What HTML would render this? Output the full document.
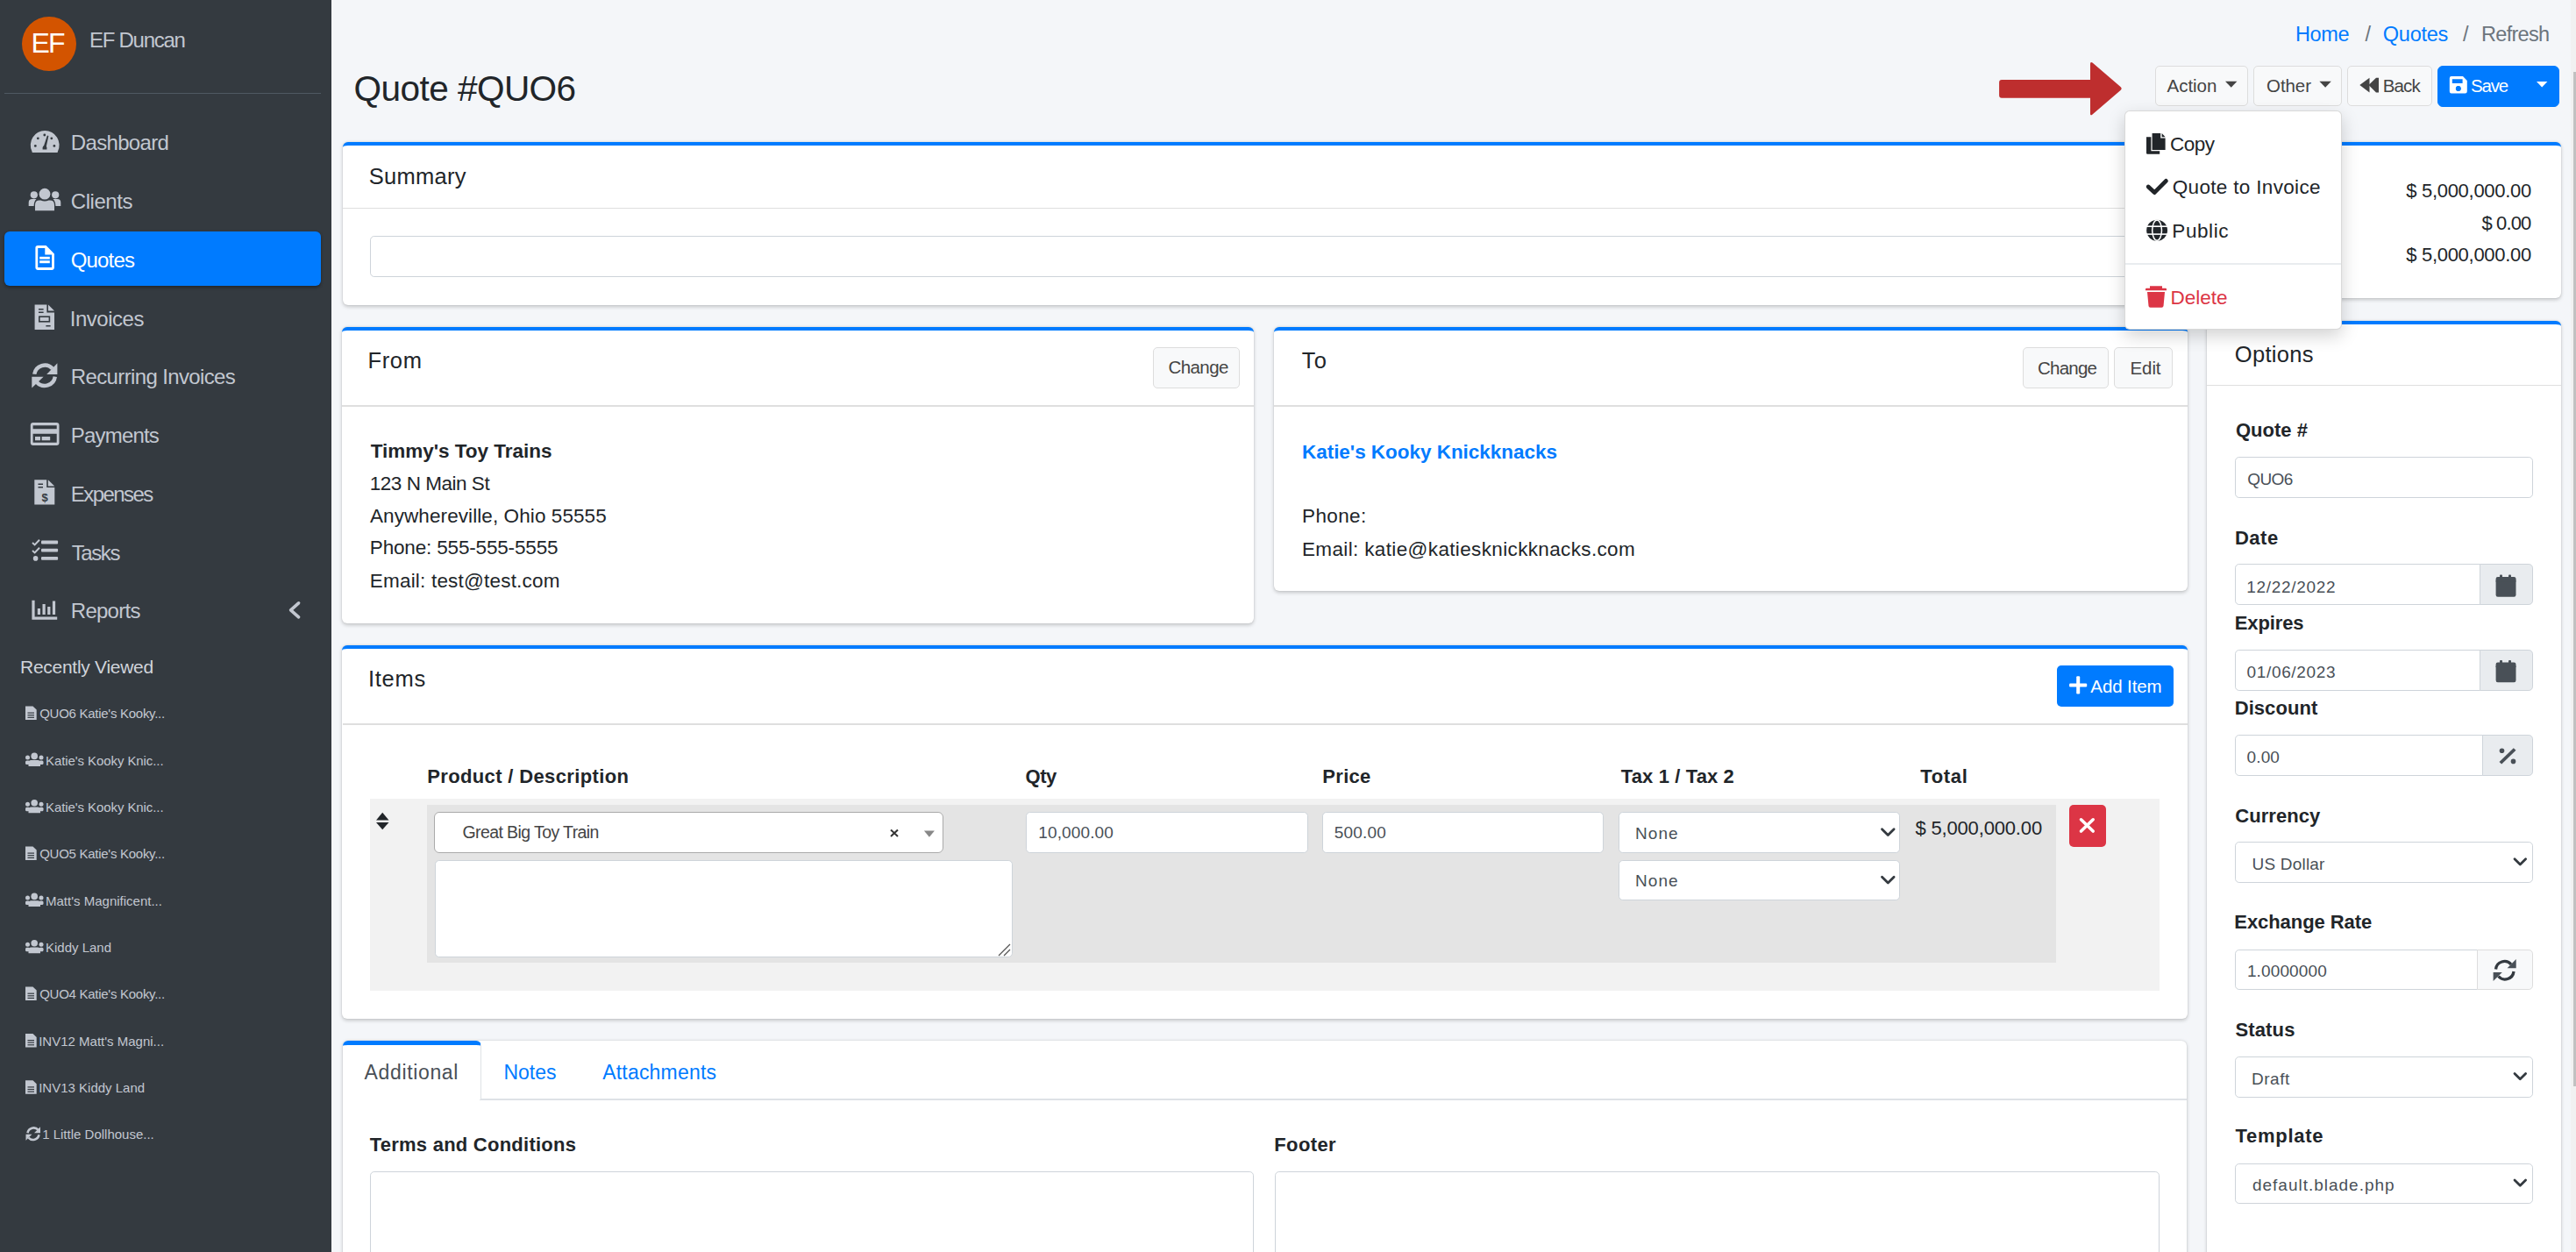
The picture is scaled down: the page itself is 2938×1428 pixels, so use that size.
<!DOCTYPE html>
<html><head><meta charset="utf-8"><title>Quote #QUO6</title>
<style>
html,body{margin:0;padding:0;width:2938px;height:1428px;overflow:hidden;background:#f4f6f9;font-family:"Liberation Sans", sans-serif;}
*{box-sizing:border-box;}
</style></head><body>
<div style="position:absolute;left:0.00px;top:0.00px;width:378.20px;height:1428.00px;background:#343a40;"></div>
<div style="position:absolute;left:25.00px;top:19.00px;width:62.00px;height:62.00px;background:#d35400;border-radius:50%;"></div>
<span style="position:absolute;left:35.50px;top:33.31px;font-size:32px;line-height:32px;color:#fff;font-weight:400;white-space:pre;letter-spacing:-1.844px;">EF</span>
<span style="position:absolute;left:102.00px;top:34.28px;font-size:24px;line-height:24px;color:#c2c7d0;font-weight:400;white-space:pre;letter-spacing:-1.276px;">EF Duncan</span>
<div style="position:absolute;left:5.00px;top:105.50px;width:361.00px;height:1.50px;background:#4f5962;"></div>
<div style="position:absolute;left:5.00px;top:264.20px;width:361.40px;height:61.70px;background:#007bff;border-radius:6px;box-shadow:0 1.5px 4.5px rgba(0,0,0,.12),0 1.5px 3px rgba(0,0,0,.24);"></div>
<span style="position:absolute;left:80.80px;top:151.48px;font-size:24px;line-height:24px;color:#c2c7d0;font-weight:400;white-space:pre;letter-spacing:-0.670px;">Dashboard</span>
<span style="position:absolute;left:80.80px;top:218.23px;font-size:24px;line-height:24px;color:#c2c7d0;font-weight:400;white-space:pre;letter-spacing:-0.460px;">Clients</span>
<span style="position:absolute;left:80.80px;top:284.98px;font-size:24px;line-height:24px;color:#fff;font-weight:400;white-space:pre;letter-spacing:-0.856px;">Quotes</span>
<span style="position:absolute;left:79.80px;top:351.73px;font-size:24px;line-height:24px;color:#c2c7d0;font-weight:400;white-space:pre;letter-spacing:-0.492px;">Invoices</span>
<span style="position:absolute;left:80.80px;top:418.48px;font-size:24px;line-height:24px;color:#c2c7d0;font-weight:400;white-space:pre;letter-spacing:-0.632px;">Recurring Invoices</span>
<span style="position:absolute;left:80.80px;top:485.23px;font-size:24px;line-height:24px;color:#c2c7d0;font-weight:400;white-space:pre;letter-spacing:-0.816px;">Payments</span>
<span style="position:absolute;left:80.80px;top:551.98px;font-size:24px;line-height:24px;color:#c2c7d0;font-weight:400;white-space:pre;letter-spacing:-1.571px;">Expenses</span>
<span style="position:absolute;left:81.80px;top:618.73px;font-size:24px;line-height:24px;color:#c2c7d0;font-weight:400;white-space:pre;letter-spacing:-1.437px;">Tasks</span>
<span style="position:absolute;left:80.80px;top:685.48px;font-size:24px;line-height:24px;color:#c2c7d0;font-weight:400;white-space:pre;letter-spacing:-0.739px;">Reports</span>
<svg style="position:absolute;left:0;top:0;overflow:visible" width="2938" height="1428" viewBox="0 0 2938 1428" fill="#c2c7d0"><path d="M36.4 172.5 A16.4 16.4 0 1 1 66 172.5 L65.6 174 L36.8 174 Z"/><g fill="#343a40"><circle cx="43.3" cy="157.8" r="1.4"/><circle cx="50.8" cy="154" r="1.4"/><circle cx="58.8" cy="157.8" r="1.4"/><circle cx="40.3" cy="166.4" r="1.4"/><circle cx="61.9" cy="166.4" r="1.4"/><path d="M53.9 154.5 L55.4 155 L52.6 168 L49.6 167.4 Z"/><path d="M48.6 168.5 Q48.6 166 51 166 Q53.4 166 53.4 168.5 L53.4 170.6 L48.6 170.6 Z"/></g><circle cx="51" cy="221.2" r="6.4"/><path d="M40 240.3 L40 234 Q40 228.6 45 228.6 L46.5 228.6 Q51 230.6 55.5 228.6 L57 228.6 Q62 228.6 62 234 L62 240.3 Z"/><circle cx="38.8" cy="222.3" r="4.1"/><circle cx="63.2" cy="222.3" r="4.1"/><path d="M32.7 234.9 L32.7 231 Q32.7 227.1 36.7 227.1 L41.5 227.1 Q38.6 230 38.6 234.9 Z"/><path d="M69.3 234.9 L69.3 231 Q69.3 227.1 65.3 227.1 L60.5 227.1 Q63.4 230 63.4 234.9 Z"/><path fill="#fff" fill-rule="evenodd" d="M40.4 282.8 Q40.4 280 43.2 280 L52.6 280 L61.9 289.4 L61.9 305.1 Q61.9 307.9 59.1 307.9 L43.2 307.9 Q40.4 307.9 40.4 305.1 Z M43.2 282.9 L43.2 305 L59.1 305 L59.1 290.5 L51.3 290.5 L51.3 282.9 Z"/><rect fill="#fff" x="45.2" y="292.8" width="11.6" height="2.8"/><rect fill="#fff" x="45.2" y="297.2" width="11.6" height="3.0"/><path d="M39.6 347.6 L53.4 347.6 L53.4 356.4 L62 356.4 L62 376 L39.6 376 Z"/><path d="M55 347.6 L62 354.6 L55 354.6 Z"/><g fill="#343a40"><rect x="44" y="352" width="5.6" height="1.5"/><rect x="44" y="355.5" width="5.6" height="1.5"/><rect x="44" y="360.4" width="13.2" height="7.2"/><rect x="52.4" y="371" width="5.2" height="1.5"/></g><rect x="45.6" y="362" width="10" height="4" fill="#c2c7d0"/><g fill="none" stroke="#c2c7d0" stroke-width="4.4"><path d="M39.2 426.8 A12 12 0 0 1 60 420.5"/><path d="M62.8 429.6 A12 12 0 0 1 42 436"/></g><path d="M65.4 414.3 L65.4 426.9 L53.2 426.9 Z"/><path d="M36.3 442.4 L36.3 429.8 L49.6 429.8 Z"/><path fill-rule="evenodd" d="M37.8 482 L64.5 482 Q67.5 482 67.5 485 L67.5 505 Q67.5 508 64.5 508 L37.8 508 Q34.8 508 34.8 505 L34.8 485 Q34.8 482 37.8 482 Z M37.6 485.3 L37.6 489.2 L64.7 489.2 L64.7 485.3 Z M37.6 494.8 L37.6 504.8 L64.7 504.8 L64.7 494.8 Z"/><rect x="40" y="498" width="6" height="4.3"/><rect x="47.6" y="498" width="9.6" height="4.3"/><path d="M39.3 547.3 L53.2 547.3 L53.2 556 L62.3 556 L62.3 575.5 L39.3 575.5 Z"/><path d="M54.8 547.3 L62.3 554.6 L54.8 554.6 Z"/><g fill="#343a40"><rect x="43.5" y="551.5" width="5.5" height="1.5"/><rect x="43.5" y="555" width="5.5" height="1.5"/></g><text x="51" y="572" font-size="13" font-family="Liberation Sans" font-weight="700" fill="#343a40" text-anchor="middle">$</text><rect x="47" y="616.6" width="19.1" height="3.8" rx="1"/><rect x="47" y="625.8" width="19.1" height="3.8" rx="1"/><rect x="47" y="634.9" width="19.1" height="3.8" rx="1"/><g fill="none" stroke="#c2c7d0" stroke-width="2"><path d="M37 619 L39.6 621.4 L45 615.8"/><path d="M37 628 L39.6 630.4 L45 624.8"/></g><circle cx="40.6" cy="636.9" r="2.8"/><path d="M36.4 684.7 L39.6 684.7 L39.6 703.5 L65.2 703.5 L65.2 706.8 L36.4 706.8 Z"/><rect x="42.8" y="694" width="3.2" height="7"/><rect x="48.5" y="689" width="3.2" height="12"/><rect x="54.2" y="692" width="3.2" height="9"/><rect x="59.9" y="685.5" width="3.2" height="15.5"/><path d="M340.6 687.8 L331.6 695.8 L340.6 703.8" fill="none" stroke="#c2c7d0" stroke-width="3.6" stroke-linecap="round" stroke-linejoin="round"/></svg>
<span style="position:absolute;left:23.00px;top:750.22px;font-size:21px;line-height:21px;color:#d0d4db;font-weight:400;white-space:pre;letter-spacing:-0.275px;">Recently Viewed</span>
<span style="position:absolute;left:45.20px;top:806.30px;font-size:15px;line-height:15px;color:#c2c7d0;font-weight:400;white-space:pre;letter-spacing:-0.275px;">QUO6 Katie&#x27;s Kooky...</span>
<span style="position:absolute;left:52.00px;top:859.65px;font-size:15px;line-height:15px;color:#c2c7d0;font-weight:400;white-space:pre;letter-spacing:-0.085px;">Katie&#x27;s Kooky Knic...</span>
<span style="position:absolute;left:52.00px;top:913.00px;font-size:15px;line-height:15px;color:#c2c7d0;font-weight:400;white-space:pre;letter-spacing:-0.085px;">Katie&#x27;s Kooky Knic...</span>
<span style="position:absolute;left:45.20px;top:966.35px;font-size:15px;line-height:15px;color:#c2c7d0;font-weight:400;white-space:pre;letter-spacing:-0.275px;">QUO5 Katie&#x27;s Kooky...</span>
<span style="position:absolute;left:52.00px;top:1019.70px;font-size:15px;line-height:15px;color:#c2c7d0;font-weight:400;white-space:pre;">Matt&#x27;s Magnificent...</span>
<span style="position:absolute;left:52.00px;top:1073.05px;font-size:15px;line-height:15px;color:#c2c7d0;font-weight:400;white-space:pre;">Kiddy Land</span>
<span style="position:absolute;left:45.20px;top:1126.40px;font-size:15px;line-height:15px;color:#c2c7d0;font-weight:400;white-space:pre;letter-spacing:-0.275px;">QUO4 Katie&#x27;s Kooky...</span>
<span style="position:absolute;left:44.20px;top:1179.75px;font-size:15px;line-height:15px;color:#c2c7d0;font-weight:400;white-space:pre;">INV12 Matt&#x27;s Magni...</span>
<span style="position:absolute;left:44.20px;top:1233.10px;font-size:15px;line-height:15px;color:#c2c7d0;font-weight:400;white-space:pre;">INV13 Kiddy Land</span>
<span style="position:absolute;left:48.20px;top:1286.45px;font-size:15px;line-height:15px;color:#c2c7d0;font-weight:400;white-space:pre;">1 Little Dollhouse...</span>
<svg style="position:absolute;left:0;top:0;overflow:visible" width="2938" height="1428" viewBox="0 0 2938 1428" fill="#c2c7d0"><path d="M29 805.5 L37.5 805.5 L41.7 809.5 L41.7 821.0 L29 821.0 Z"/><g fill="#343a40"><rect x="31.5" y="812.5" width="7.5" height="1.2"/><rect x="31.5" y="815.1" width="7.5" height="1.2"/><rect x="31.5" y="817.7" width="7.5" height="1.2"/></g><circle cx="39.2" cy="862.4" r="3.8"/><path d="M32.5 873.9 L32.5 870.4 Q32.5 867.1 35.5 867.1 L43 867.1 Q46 867.1 46 870.4 L46 873.9 Z"/><circle cx="31.5" cy="863.9" r="2.5"/><circle cx="47" cy="863.9" r="2.5"/><rect x="29" y="867.4" width="5" height="4.5" rx="1.5"/><rect x="44.5" y="867.4" width="5" height="4.5" rx="1.5"/><circle cx="39.2" cy="915.7" r="3.8"/><path d="M32.5 927.2 L32.5 923.7 Q32.5 920.5 35.5 920.5 L43 920.5 Q46 920.5 46 923.7 L46 927.2 Z"/><circle cx="31.5" cy="917.2" r="2.5"/><circle cx="47" cy="917.2" r="2.5"/><rect x="29" y="920.7" width="5" height="4.5" rx="1.5"/><rect x="44.5" y="920.7" width="5" height="4.5" rx="1.5"/><path d="M29 965.5 L37.5 965.5 L41.7 969.5 L41.7 981.0 L29 981.0 Z"/><g fill="#343a40"><rect x="31.5" y="972.5" width="7.5" height="1.2"/><rect x="31.5" y="975.1" width="7.5" height="1.2"/><rect x="31.5" y="977.8" width="7.5" height="1.2"/></g><circle cx="39.2" cy="1022.4" r="3.8"/><path d="M32.5 1033.9 L32.5 1030.4 Q32.5 1027.2 35.5 1027.2 L43 1027.2 Q46 1027.2 46 1030.4 L46 1033.9 Z"/><circle cx="31.5" cy="1023.9" r="2.5"/><circle cx="47" cy="1023.9" r="2.5"/><rect x="29" y="1027.4" width="5" height="4.5" rx="1.5"/><rect x="44.5" y="1027.4" width="5" height="4.5" rx="1.5"/><circle cx="39.2" cy="1075.8" r="3.8"/><path d="M32.5 1087.2 L32.5 1083.8 Q32.5 1080.5 35.5 1080.5 L43 1080.5 Q46 1080.5 46 1083.8 L46 1087.2 Z"/><circle cx="31.5" cy="1077.2" r="2.5"/><circle cx="47" cy="1077.2" r="2.5"/><rect x="29" y="1080.8" width="5" height="4.5" rx="1.5"/><rect x="44.5" y="1080.8" width="5" height="4.5" rx="1.5"/><path d="M29 1125.6 L37.5 1125.6 L41.7 1129.6 L41.7 1141.1 L29 1141.1 Z"/><g fill="#343a40"><rect x="31.5" y="1132.6" width="7.5" height="1.2"/><rect x="31.5" y="1135.2" width="7.5" height="1.2"/><rect x="31.5" y="1137.8" width="7.5" height="1.2"/></g><path d="M29 1179.0 L37.5 1179.0 L41.7 1183.0 L41.7 1194.5 L29 1194.5 Z"/><g fill="#343a40"><rect x="31.5" y="1186.0" width="7.5" height="1.2"/><rect x="31.5" y="1188.5" width="7.5" height="1.2"/><rect x="31.5" y="1191.2" width="7.5" height="1.2"/></g><path d="M29 1232.3 L37.5 1232.3 L41.7 1236.3 L41.7 1247.8 L29 1247.8 Z"/><g fill="#343a40"><rect x="31.5" y="1239.3" width="7.5" height="1.2"/><rect x="31.5" y="1241.9" width="7.5" height="1.2"/><rect x="31.5" y="1244.5" width="7.5" height="1.2"/></g><g fill="none" stroke="#c2c7d0" stroke-width="2.6"><path d="M31.5 1292.2 A7 7 0 0 1 43.5 1288.7"/><path d="M44.5 1294.2 A7 7 0 0 1 32.5 1297.7"/></g><path d="M46 1285.2 L46 1292.2 L39 1292.2 Z"/><path d="M29.5 1300.7 L29.5 1293.7 L36.5 1293.7 Z"/></svg>
<span style="position:absolute;left:2618.00px;top:27.90px;font-size:23.5px;line-height:23.5px;color:#007bff;font-weight:400;white-space:pre;letter-spacing:-0.405px;">Home</span>
<span style="position:absolute;left:2697.50px;top:27.90px;font-size:23.5px;line-height:23.5px;color:#6c757d;font-weight:400;white-space:pre;">/</span>
<span style="position:absolute;left:2717.80px;top:27.90px;font-size:23.5px;line-height:23.5px;color:#007bff;font-weight:400;white-space:pre;letter-spacing:-0.243px;">Quotes</span>
<span style="position:absolute;left:2809.00px;top:27.90px;font-size:23.5px;line-height:23.5px;color:#6c757d;font-weight:400;white-space:pre;">/</span>
<span style="position:absolute;left:2830.00px;top:27.90px;font-size:23.5px;line-height:23.5px;color:#6c757d;font-weight:400;white-space:pre;letter-spacing:-0.702px;">Refresh</span>
<span style="position:absolute;left:403.60px;top:80.82px;font-size:40.6px;line-height:40.6px;color:#212529;font-weight:400;white-space:pre;letter-spacing:-0.581px;">Quote #QUO6</span>
<svg style="position:absolute;left:0;top:0;overflow:visible" width="2938" height="1428" viewBox="0 0 2938 1428" fill="#be2e2e"><path d="M2283 90.9 L2384 90.9 L2384 73 Q2384 70 2386.5 71.5 L2418.5 99 Q2420.8 101 2418.5 103 L2386.5 130.5 Q2384 132.6 2384 129.5 L2384 111.8 L2283 111.8 Q2280.1 111.8 2280.1 108.8 L2280.1 93.9 Q2280.1 90.9 2283 90.9 Z"/></svg>
<div style="position:absolute;left:2458.30px;top:74.80px;width:106.20px;height:46.70px;background:#f8f9fa;border:1.5px solid #ddd;border-radius:5px;"></div>
<div style="position:absolute;left:2570.40px;top:74.80px;width:100.60px;height:46.70px;background:#f8f9fa;border:1.5px solid #ddd;border-radius:5px;"></div>
<div style="position:absolute;left:2677.30px;top:74.80px;width:96.90px;height:46.70px;background:#f8f9fa;border:1.5px solid #ddd;border-radius:5px;"></div>
<div style="position:absolute;left:2780.30px;top:74.50px;width:138.70px;height:47.50px;background:#007bff;border:1.5px solid #007bff;border-radius:6px;"></div>
<span style="position:absolute;left:2471.50px;top:87.84px;font-size:20.5px;line-height:20.5px;color:#444;font-weight:400;white-space:pre;letter-spacing:-0.015px;">Action</span>
<span style="position:absolute;left:2585.00px;top:87.84px;font-size:20.5px;line-height:20.5px;color:#444;font-weight:400;white-space:pre;letter-spacing:-0.061px;">Other</span>
<span style="position:absolute;left:2717.80px;top:87.84px;font-size:20.5px;line-height:20.5px;color:#444;font-weight:400;white-space:pre;letter-spacing:-0.908px;">Back</span>
<span style="position:absolute;left:2818.00px;top:87.84px;font-size:20.5px;line-height:20.5px;color:#fff;font-weight:400;white-space:pre;letter-spacing:-1.208px;">Save</span>
<svg style="position:absolute;left:0;top:0;overflow:visible" width="2938" height="1428" viewBox="0 0 2938 1428" fill="#444"><path d="M2538 92.7 L2551.4 92.7 L2544.7 99.8 Z"/><path d="M2645.4 92.7 L2658.8 92.7 L2652.1 99.8 Z"/><path d="M2691.3 97.1 L2702.5 88.7 L2702.5 105.5 Z"/><path d="M2701.5 97.1 L2710 88.7 L2713 88.7 L2713 105.5 L2710 105.5 Z"/></svg>
<svg style="position:absolute;left:0;top:0;overflow:visible" width="2938" height="1428" viewBox="0 0 2938 1428" fill="#fff"><path fill-rule="evenodd" d="M2796 87.1 L2809 87.1 L2813.8 92 L2813.8 104.3 Q2813.8 106.5 2811.6 106.5 L2796 106.5 Q2793.8 106.5 2793.8 104.3 L2793.8 89.3 Q2793.8 87.1 2796 87.1 Z M2796.8 90.2 L2796.8 95 L2808.6 95 L2808.6 90.2 Z M2803.8 98.2 A2.9 2.9 0 1 0 2803.81 98.2 Z"/><circle cx="2803.8" cy="101" r="2.9" fill="#007bff"/><path d="M2893 93 L2905.4 93 L2899.2 99.6 Z"/></svg>
<div style="position:absolute;left:390.60px;top:162.00px;width:2104.40px;height:185.60px;background:#fff;border-radius:6px;box-shadow:0 0 1.5px rgba(0,0,0,.125),0 1.5px 4.5px rgba(0,0,0,.2);border-top:4.5px solid #007bff;"></div>
<div style="position:absolute;left:390.60px;top:236.50px;width:2104.40px;height:1.50px;background:rgba(0,0,0,.125);"></div>
<span style="position:absolute;left:420.80px;top:188.71px;font-size:25.5px;line-height:25.5px;color:#212529;font-weight:400;white-space:pre;letter-spacing:0.275px;">Summary</span>
<div style="position:absolute;left:422.00px;top:269.40px;width:2042.00px;height:46.90px;background:#fff;border:1.5px solid #ced4da;border-radius:4.8px;"></div>
<div style="position:absolute;left:2517.50px;top:162.00px;width:403.50px;height:177.50px;background:#fff;border-radius:6px;box-shadow:0 0 1.5px rgba(0,0,0,.125),0 1.5px 4.5px rgba(0,0,0,.2);border-top:4.5px solid #007bff;"></div>
<span style="position:absolute;left:2744.20px;top:206.67px;font-size:22px;line-height:22px;color:#212529;font-weight:400;white-space:pre;letter-spacing:-0.290px;">$ 5,000,000.00</span>
<span style="position:absolute;left:2830.50px;top:243.57px;font-size:22px;line-height:22px;color:#212529;font-weight:400;white-space:pre;letter-spacing:-0.886px;">$ 0.00</span>
<span style="position:absolute;left:2744.20px;top:280.37px;font-size:22px;line-height:22px;color:#212529;font-weight:400;white-space:pre;letter-spacing:-0.290px;">$ 5,000,000.00</span>
<div style="position:absolute;left:390.30px;top:372.50px;width:1040.00px;height:338.50px;background:#fff;border-radius:6px;box-shadow:0 0 1.5px rgba(0,0,0,.125),0 1.5px 4.5px rgba(0,0,0,.2);border-top:4.5px solid #007bff;"></div>
<div style="position:absolute;left:390.30px;top:462.30px;width:1040.00px;height:1.50px;background:rgba(0,0,0,.125);"></div>
<span style="position:absolute;left:419.50px;top:398.61px;font-size:25.5px;line-height:25.5px;color:#212529;font-weight:400;white-space:pre;letter-spacing:0.650px;">From</span>
<div style="position:absolute;left:1315.30px;top:396.20px;width:99.20px;height:46.70px;background:#f8f9fa;border:1.5px solid #ddd;border-radius:5px;"></div>
<span style="position:absolute;left:1332.50px;top:409.24px;font-size:20.5px;line-height:20.5px;color:#444;font-weight:400;white-space:pre;letter-spacing:-0.582px;">Change</span>
<span style="position:absolute;left:422.80px;top:504.25px;font-size:22.5px;line-height:22.5px;color:#212529;font-weight:700;white-space:pre;letter-spacing:-0.028px;">Timmy&#x27;s Toy Trains</span>
<span style="position:absolute;left:421.80px;top:540.95px;font-size:22.5px;line-height:22.5px;color:#212529;font-weight:400;white-space:pre;letter-spacing:-0.477px;">123 N Main St</span>
<span style="position:absolute;left:422.00px;top:577.65px;font-size:22.5px;line-height:22.5px;color:#212529;font-weight:400;white-space:pre;letter-spacing:0.086px;">Anywhereville, Ohio 55555</span>
<span style="position:absolute;left:421.80px;top:614.45px;font-size:22.5px;line-height:22.5px;color:#212529;font-weight:400;white-space:pre;letter-spacing:-0.165px;">Phone: 555-555-5555</span>
<span style="position:absolute;left:421.80px;top:651.95px;font-size:22.5px;line-height:22.5px;color:#212529;font-weight:400;white-space:pre;letter-spacing:0.197px;">Email: test@test.com</span>
<div style="position:absolute;left:1452.90px;top:372.50px;width:1042.10px;height:301.50px;background:#fff;border-radius:6px;box-shadow:0 0 1.5px rgba(0,0,0,.125),0 1.5px 4.5px rgba(0,0,0,.2);border-top:4.5px solid #007bff;"></div>
<div style="position:absolute;left:1452.90px;top:462.30px;width:1042.10px;height:1.50px;background:rgba(0,0,0,.125);"></div>
<span style="position:absolute;left:1484.70px;top:398.81px;font-size:25.5px;line-height:25.5px;color:#212529;font-weight:400;white-space:pre;letter-spacing:1.250px;">To</span>
<div style="position:absolute;left:2306.70px;top:396.30px;width:98.60px;height:46.90px;background:#f8f9fa;border:1.5px solid #ddd;border-radius:5px;"></div>
<span style="position:absolute;left:2324.00px;top:409.54px;font-size:20.5px;line-height:20.5px;color:#444;font-weight:400;white-space:pre;letter-spacing:-0.782px;">Change</span>
<div style="position:absolute;left:2411.40px;top:396.30px;width:66.90px;height:46.90px;background:#f8f9fa;border:1.5px solid #ddd;border-radius:5px;"></div>
<span style="position:absolute;left:2429.60px;top:409.54px;font-size:20.5px;line-height:20.5px;color:#444;font-weight:400;white-space:pre;letter-spacing:-0.143px;">Edit</span>
<span style="position:absolute;left:1485.00px;top:504.95px;font-size:22.5px;line-height:22.5px;color:#007bff;font-weight:700;white-space:pre;letter-spacing:-0.034px;">Katie&#x27;s Kooky Knickknacks</span>
<span style="position:absolute;left:1485.00px;top:578.45px;font-size:22.5px;line-height:22.5px;color:#212529;font-weight:400;white-space:pre;letter-spacing:0.388px;">Phone:</span>
<span style="position:absolute;left:1485.00px;top:616.05px;font-size:22.5px;line-height:22.5px;color:#212529;font-weight:400;white-space:pre;letter-spacing:0.357px;">Email: katie@katiesknickknacks.com</span>
<div style="position:absolute;left:2517.30px;top:365.70px;width:403.50px;height:1134.30px;background:#fff;border-radius:6px;box-shadow:0 0 1.5px rgba(0,0,0,.125),0 1.5px 4.5px rgba(0,0,0,.2);border-top:4.5px solid #007bff;"></div>
<div style="position:absolute;left:2517.30px;top:438.50px;width:403.50px;height:1.50px;background:rgba(0,0,0,.125);"></div>
<span style="position:absolute;left:2548.80px;top:391.81px;font-size:25.5px;line-height:25.5px;color:#212529;font-weight:400;white-space:pre;letter-spacing:0.312px;">Options</span>
<span style="position:absolute;left:2549.90px;top:480.47px;font-size:22px;line-height:22px;color:#212529;font-weight:700;white-space:pre;letter-spacing:0.039px;">Quote #</span>
<div style="position:absolute;left:2549.20px;top:521.20px;width:340.10px;height:47.20px;background:#fff;border:1.5px solid #ced4da;border-radius:4.8px;"></div>
<span style="position:absolute;left:2563.20px;top:536.81px;font-size:19px;line-height:19px;color:#495057;font-weight:400;white-space:pre;letter-spacing:-0.560px;">QUO6</span>
<span style="position:absolute;left:2548.90px;top:602.87px;font-size:22px;line-height:22px;color:#212529;font-weight:700;white-space:pre;letter-spacing:0.517px;">Date</span>
<div style="position:absolute;left:2549.20px;top:643.40px;width:279.80px;height:47.00px;background:#fff;border:1.5px solid #ced4da;border-radius:4.8px;border-radius:4.8px 0 0 4.8px;"></div>
<div style="position:absolute;left:2827.80px;top:643.40px;width:61.50px;height:47.00px;background:#e9ecef;border:1.5px solid #ced4da;border-radius:0 4.8px 4.8px 0;"></div>
<span style="position:absolute;left:2562.30px;top:659.61px;font-size:19px;line-height:19px;color:#495057;font-weight:400;white-space:pre;letter-spacing:0.675px;">12/22/2022</span>
<span style="position:absolute;left:2548.70px;top:699.77px;font-size:22px;line-height:22px;color:#212529;font-weight:700;white-space:pre;letter-spacing:-0.109px;">Expires</span>
<div style="position:absolute;left:2549.20px;top:741.00px;width:279.80px;height:46.80px;background:#fff;border:1.5px solid #ced4da;border-radius:4.8px;border-radius:4.8px 0 0 4.8px;"></div>
<div style="position:absolute;left:2827.80px;top:741.00px;width:61.50px;height:46.80px;background:#e9ecef;border:1.5px solid #ced4da;border-radius:0 4.8px 4.8px 0;"></div>
<span style="position:absolute;left:2562.60px;top:756.61px;font-size:19px;line-height:19px;color:#495057;font-weight:400;white-space:pre;letter-spacing:0.642px;">01/06/2023</span>
<span style="position:absolute;left:2548.70px;top:797.27px;font-size:22px;line-height:22px;color:#212529;font-weight:700;white-space:pre;letter-spacing:0.059px;">Discount</span>
<div style="position:absolute;left:2549.20px;top:838.00px;width:282.80px;height:47.00px;background:#fff;border:1.5px solid #ced4da;border-radius:4.8px;border-radius:4.8px 0 0 4.8px;"></div>
<div style="position:absolute;left:2830.80px;top:838.00px;width:58.50px;height:47.00px;background:#e9ecef;border:1.5px solid #ced4da;border-radius:0 4.8px 4.8px 0;"></div>
<span style="position:absolute;left:2562.60px;top:853.71px;font-size:19px;line-height:19px;color:#495057;font-weight:400;white-space:pre;letter-spacing:0.096px;">0.00</span>
<span style="position:absolute;left:2549.30px;top:919.77px;font-size:22px;line-height:22px;color:#212529;font-weight:700;white-space:pre;letter-spacing:0.035px;">Currency</span>
<div style="position:absolute;left:2548.70px;top:960.20px;width:340.80px;height:46.70px;background:#fff;border:1.5px solid #ced4da;border-radius:4.8px;"></div>
<span style="position:absolute;left:2568.50px;top:975.91px;font-size:19px;line-height:19px;color:#495057;font-weight:400;white-space:pre;letter-spacing:0.204px;">US Dollar</span>
<span style="position:absolute;left:2548.30px;top:1041.37px;font-size:22px;line-height:22px;color:#212529;font-weight:700;white-space:pre;letter-spacing:-0.066px;">Exchange Rate</span>
<div style="position:absolute;left:2548.70px;top:1082.70px;width:277.80px;height:46.30px;background:#fff;border:1.5px solid #ced4da;border-radius:4.8px;border-radius:4.8px 0 0 4.8px;"></div>
<div style="position:absolute;left:2825.30px;top:1082.70px;width:64.20px;height:46.30px;background:#f8f9fa;border:1.5px solid #ddd;border-radius:0 4.8px 4.8px 0;"></div>
<span style="position:absolute;left:2562.90px;top:1097.81px;font-size:19px;line-height:19px;color:#495057;font-weight:400;white-space:pre;letter-spacing:0.132px;">1.0000000</span>
<span style="position:absolute;left:2549.40px;top:1164.07px;font-size:22px;line-height:22px;color:#212529;font-weight:700;white-space:pre;letter-spacing:0.160px;">Status</span>
<div style="position:absolute;left:2548.70px;top:1205.00px;width:340.80px;height:46.50px;background:#fff;border:1.5px solid #ced4da;border-radius:4.8px;"></div>
<span style="position:absolute;left:2568.00px;top:1220.71px;font-size:19px;line-height:19px;color:#495057;font-weight:400;white-space:pre;letter-spacing:0.526px;">Draft</span>
<span style="position:absolute;left:2549.40px;top:1285.17px;font-size:22px;line-height:22px;color:#212529;font-weight:700;white-space:pre;letter-spacing:0.741px;">Template</span>
<div style="position:absolute;left:2548.70px;top:1326.60px;width:340.80px;height:46.60px;background:#fff;border:1.5px solid #ced4da;border-radius:4.8px;"></div>
<span style="position:absolute;left:2569.00px;top:1342.31px;font-size:19px;line-height:19px;color:#495057;font-weight:400;white-space:pre;letter-spacing:0.986px;">default.blade.php</span>
<svg style="position:absolute;left:0;top:0;overflow:visible" width="2938" height="1428" viewBox="0 0 2938 1428" fill="#495057"><path d="M2846.6 662.0 L2869.5 662.0 L2869.5 678.5 Q2869.5 680.7 2867.3 680.7 L2848.8 680.7 Q2846.6 680.7 2846.6 678.5 Z"/><path d="M2848.8 658.0 L2867.3 658.0 Q2869.5 658.0 2869.5 660.2 L2869.5 663.5 L2846.6 663.5 L2846.6 660.2 Q2846.6 658.0 2848.8 658.0 Z"/><rect x="2851" y="655.4" width="3" height="5" rx="1"/><rect x="2861" y="655.4" width="3" height="5" rx="1"/><path d="M2846.6 759.5 L2869.5 759.5 L2869.5 776.0 Q2869.5 778.2 2867.3 778.2 L2848.8 778.2 Q2846.6 778.2 2846.6 776.0 Z"/><path d="M2848.8 755.5 L2867.3 755.5 Q2869.5 755.5 2869.5 757.7 L2869.5 761.0 L2846.6 761.0 L2846.6 757.7 Q2846.6 755.5 2848.8 755.5 Z"/><rect x="2851" y="752.9" width="3" height="5" rx="1"/><rect x="2861" y="752.9" width="3" height="5" rx="1"/><circle cx="2853.5" cy="856.3" r="2.8"/><circle cx="2866.5" cy="868.4" r="2.8"/><path d="M2866.8 853.2 L2869.5 855.8 L2853.2 871.5 L2850.5 868.9 Z"/><path d="M2868 979.7 L2874.3 986.0 L2880.6 979.7" fill="none" stroke="#343a40" stroke-width="2.8" stroke-linecap="round" stroke-linejoin="round"/><path d="M2868 1224.4 L2874.3 1230.7 L2880.6 1224.4" fill="none" stroke="#343a40" stroke-width="2.8" stroke-linecap="round" stroke-linejoin="round"/><path d="M2868 1346.0 L2874.3 1352.3 L2880.6 1346.0" fill="none" stroke="#343a40" stroke-width="2.8" stroke-linecap="round" stroke-linejoin="round"/><g fill="none" stroke="#343a40" stroke-width="3.3"><path d="M2846.5 1105.5 A10 10 0 0 1 2864 1100"/><path d="M2867 1108 A10 10 0 0 1 2849.5 1113.5"/></g><path d="M2869.7 1094.1 L2869.7 1104.2 L2859.6 1104.2 Z"/><path d="M2843.6 1119 L2843.6 1109 L2853.8 1109 Z"/></svg>
<div style="position:absolute;left:390.30px;top:735.50px;width:2104.50px;height:426.70px;background:#fff;border-radius:6px;box-shadow:0 0 1.5px rgba(0,0,0,.125),0 1.5px 4.5px rgba(0,0,0,.2);border-top:4.5px solid #007bff;"></div>
<div style="position:absolute;left:390.60px;top:825.00px;width:2104.20px;height:1.50px;background:rgba(0,0,0,.125);"></div>
<span style="position:absolute;left:419.90px;top:761.91px;font-size:25.5px;line-height:25.5px;color:#212529;font-weight:400;white-space:pre;letter-spacing:0.727px;">Items</span>
<div style="position:absolute;left:2346.00px;top:758.80px;width:133.00px;height:47.70px;background:#007bff;border-radius:5px;"></div>
<span style="position:absolute;left:2384.30px;top:772.54px;font-size:20.5px;line-height:20.5px;color:#fff;font-weight:400;white-space:pre;letter-spacing:-0.095px;">Add Item</span>
<svg style="position:absolute;left:0;top:0;overflow:visible" width="2938" height="1428" viewBox="0 0 2938 1428" fill="#fff"><rect x="2360.1" y="779.4" width="20.1" height="4" rx="1.2"/><rect x="2368.2" y="771.3" width="4" height="20.1" rx="1.2"/></svg>
<span style="position:absolute;left:487.20px;top:874.77px;font-size:22px;line-height:22px;color:#212529;font-weight:700;white-space:pre;letter-spacing:0.363px;">Product / Description</span>
<span style="position:absolute;left:1169.40px;top:874.77px;font-size:22px;line-height:22px;color:#212529;font-weight:700;white-space:pre;letter-spacing:-0.369px;">Qty</span>
<span style="position:absolute;left:1508.30px;top:874.77px;font-size:22px;line-height:22px;color:#212529;font-weight:700;white-space:pre;letter-spacing:0.304px;">Price</span>
<span style="position:absolute;left:1848.80px;top:874.77px;font-size:22px;line-height:22px;color:#212529;font-weight:700;white-space:pre;letter-spacing:0.121px;">Tax 1 / Tax 2</span>
<span style="position:absolute;left:2190.30px;top:874.77px;font-size:22px;line-height:22px;color:#212529;font-weight:700;white-space:pre;letter-spacing:0.649px;">Total</span>
<div style="position:absolute;left:421.80px;top:910.50px;width:2041.20px;height:219.90px;background:#f2f2f2;"></div>
<div style="position:absolute;left:486.80px;top:918.20px;width:1857.90px;height:180.10px;background:#e4e4e4;"></div>
<div style="position:absolute;left:495.10px;top:926.10px;width:581.20px;height:47.10px;background:#fff;border:1.5px solid #aaa;border-radius:6px;"></div>
<span style="position:absolute;left:527.40px;top:940.39px;font-size:19.5px;line-height:19.5px;color:#444;font-weight:400;white-space:pre;letter-spacing:-0.584px;">Great Big Toy Train</span>
<div style="position:absolute;left:495.50px;top:980.50px;width:659.00px;height:111.50px;background:#fff;border:1.5px solid #ced4da;border-radius:4.8px;"></div>
<div style="position:absolute;left:1170.20px;top:926.30px;width:322.00px;height:46.50px;background:#fff;border:1.5px solid #ced4da;border-radius:4.8px;"></div>
<span style="position:absolute;left:1184.30px;top:940.41px;font-size:19px;line-height:19px;color:#495057;font-weight:400;white-space:pre;letter-spacing:0.130px;">10,000.00</span>
<div style="position:absolute;left:1508.10px;top:926.30px;width:321.40px;height:46.50px;background:#fff;border:1.5px solid #ced4da;border-radius:4.8px;"></div>
<span style="position:absolute;left:1521.70px;top:940.41px;font-size:19px;line-height:19px;color:#495057;font-weight:400;white-space:pre;letter-spacing:0.191px;">500.00</span>
<div style="position:absolute;left:1846.40px;top:926.30px;width:320.90px;height:46.50px;background:#fff;border:1.5px solid #ced4da;border-radius:4.8px;"></div>
<span style="position:absolute;left:1865.00px;top:940.91px;font-size:19px;line-height:19px;color:#495057;font-weight:400;white-space:pre;letter-spacing:1.048px;">None</span>
<div style="position:absolute;left:1846.40px;top:980.80px;width:320.90px;height:46.20px;background:#fff;border:1.5px solid #ced4da;border-radius:4.8px;"></div>
<span style="position:absolute;left:1865.00px;top:995.41px;font-size:19px;line-height:19px;color:#495057;font-weight:400;white-space:pre;letter-spacing:1.048px;">None</span>
<span style="position:absolute;left:2184.40px;top:934.27px;font-size:22px;line-height:22px;color:#212529;font-weight:400;white-space:pre;letter-spacing:-0.159px;">$ 5,000,000.00</span>
<div style="position:absolute;left:2360.10px;top:918.00px;width:41.50px;height:47.90px;background:#dc3545;border-radius:5px;"></div>
<svg style="position:absolute;left:0;top:0;overflow:visible" width="2938" height="1428" viewBox="0 0 2938 1428" fill="#212529"><path d="M429 935.4 L436.2 926.7 L443.5 935.4 Z"/><path d="M429 937.9 L443.5 937.9 L436.2 946.2 Z"/><path d="M1016 946.4 L1024 954 M1024 946.4 L1016 954" stroke="#333" stroke-width="2" fill="none"/><path d="M1053.9 947.5 L1065.9 947.5 L1059.9 954.7 Z" fill="#888"/><path d="M1139 1090 L1152 1077 M1145 1090 L1152 1083" stroke="#555" stroke-width="1.3" fill="none"/><path d="M2146.5 945.7 L2153.3 952.5 L2160.1 945.7" fill="none" stroke="#343a40" stroke-width="2.8" stroke-linecap="round" stroke-linejoin="round"/><path d="M2146.5 1000.2 L2153.3 1007.0 L2160.1 1000.2" fill="none" stroke="#343a40" stroke-width="2.8" stroke-linecap="round" stroke-linejoin="round"/><path d="M2373.5 934.8 L2387.2 948 M2387.2 934.8 L2373.5 948" stroke="#fff" stroke-width="3.6" fill="none" stroke-linecap="round"/></svg>
<div style="position:absolute;left:390.90px;top:1186.60px;width:2102.90px;height:313.40px;background:#fff;border-radius:6px;box-shadow:0 0 1.5px rgba(0,0,0,.125),0 1.5px 4.5px rgba(0,0,0,.2);"></div>
<div style="position:absolute;left:547.10px;top:1253.00px;width:1946.70px;height:1.50px;background:#dee2e6;"></div>
<div style="position:absolute;left:391.10px;top:1186.60px;width:157.50px;height:67.90px;background:#fff;border-top:5px solid #007bff;border-right:1.5px solid #dee2e6;border-radius:6px 6px 0 0;"></div>
<span style="position:absolute;left:415.60px;top:1212.03px;font-size:23px;line-height:23px;color:#495057;font-weight:400;white-space:pre;letter-spacing:0.644px;">Additional</span>
<span style="position:absolute;left:574.40px;top:1212.03px;font-size:23px;line-height:23px;color:#007bff;font-weight:400;white-space:pre;">Notes</span>
<span style="position:absolute;left:687.20px;top:1212.03px;font-size:23px;line-height:23px;color:#007bff;font-weight:400;white-space:pre;letter-spacing:0.196px;">Attachments</span>
<span style="position:absolute;left:421.70px;top:1294.67px;font-size:22px;line-height:22px;color:#212529;font-weight:700;white-space:pre;letter-spacing:0.244px;">Terms and Conditions</span>
<span style="position:absolute;left:1453.30px;top:1294.67px;font-size:22px;line-height:22px;color:#212529;font-weight:700;white-space:pre;letter-spacing:0.365px;">Footer</span>
<div style="position:absolute;left:422.00px;top:1335.60px;width:1007.60px;height:164.40px;background:#fff;border:1.5px solid #ced4da;border-radius:4.8px;"></div>
<div style="position:absolute;left:1454.30px;top:1335.60px;width:1008.70px;height:164.40px;background:#fff;border:1.5px solid #ced4da;border-radius:4.8px;"></div>
<div style="position:absolute;left:2422.50px;top:126.20px;width:248.60px;height:249.80px;background:#fff;border:1.5px solid rgba(0,0,0,.15);border-radius:6px;box-shadow:0 7px 20px rgba(0,0,0,.18);"></div>
<span style="position:absolute;left:2475.00px;top:154.05px;font-size:22.5px;line-height:22.5px;color:#212529;font-weight:400;white-space:pre;letter-spacing:-0.492px;">Copy</span>
<span style="position:absolute;left:2477.80px;top:203.25px;font-size:22.5px;line-height:22.5px;color:#212529;font-weight:400;white-space:pre;letter-spacing:0.324px;">Quote to Invoice</span>
<span style="position:absolute;left:2477.30px;top:253.05px;font-size:22.5px;line-height:22.5px;color:#212529;font-weight:400;white-space:pre;letter-spacing:0.574px;">Public</span>
<div style="position:absolute;left:2424.00px;top:300.20px;width:245.60px;height:1.50px;background:#e9ecef;"></div>
<span style="position:absolute;left:2475.50px;top:329.35px;font-size:22.5px;line-height:22.5px;color:#dc3545;font-weight:400;white-space:pre;letter-spacing:-0.005px;">Delete</span>
<svg style="position:absolute;left:0;top:0;overflow:visible" width="2938" height="1428" viewBox="0 0 2938 1428" fill="#212529"><path d="M2448 156.3 L2453.4 156.3 L2453.4 172.3 L2463.2 172.3 L2463.2 175.8 L2449.2 175.8 Q2448 175.8 2448 174.6 Z"/><path d="M2454.6 152 L2464.2 152 L2464.2 157.6 L2469.6 157.6 L2469.6 170.9 L2454.6 170.9 Z"/><path d="M2465.6 152 L2469.6 156.2 L2465.6 156.2 Z"/><path d="M2450.2 213 L2457.2 219.6 L2470.4 206.4" fill="none" stroke="#212529" stroke-width="4.8" stroke-linecap="round" stroke-linejoin="round"/><circle cx="2460.1" cy="262.7" r="11.95"/><g fill="#fff"><rect x="2447" y="257.4" width="26" height="1.6"/><rect x="2447" y="266.3" width="26" height="1.6"/></g><ellipse cx="2460.1" cy="262.7" rx="5.4" ry="11.6" fill="none" stroke="#fff" stroke-width="1.5"/></svg>
<svg style="position:absolute;left:0;top:0;overflow:visible" width="2938" height="1428" viewBox="0 0 2938 1428" fill="#dc3545"><path d="M2452 326.3 L2466 326.3 L2466 328.7 L2470 328.7 Q2471 328.7 2471 330 L2471 331.3 L2447 331.3 L2447 330 Q2447 328.7 2448 328.7 L2452 328.7 Z"/><path d="M2449 333 L2469 333 L2467.5 349 Q2467.3 350.8 2465.5 350.8 L2452.5 350.8 Q2450.7 350.8 2450.5 349 Z"/></svg>
<div style="position:absolute;left:2932.20px;top:0.00px;width:5.80px;height:1428.00px;background:#f1f1f1;"></div>
<div style="position:absolute;left:2934.70px;top:82.30px;width:3.30px;height:1156.70px;background:#c1c1c1;"></div>
</body></html>
